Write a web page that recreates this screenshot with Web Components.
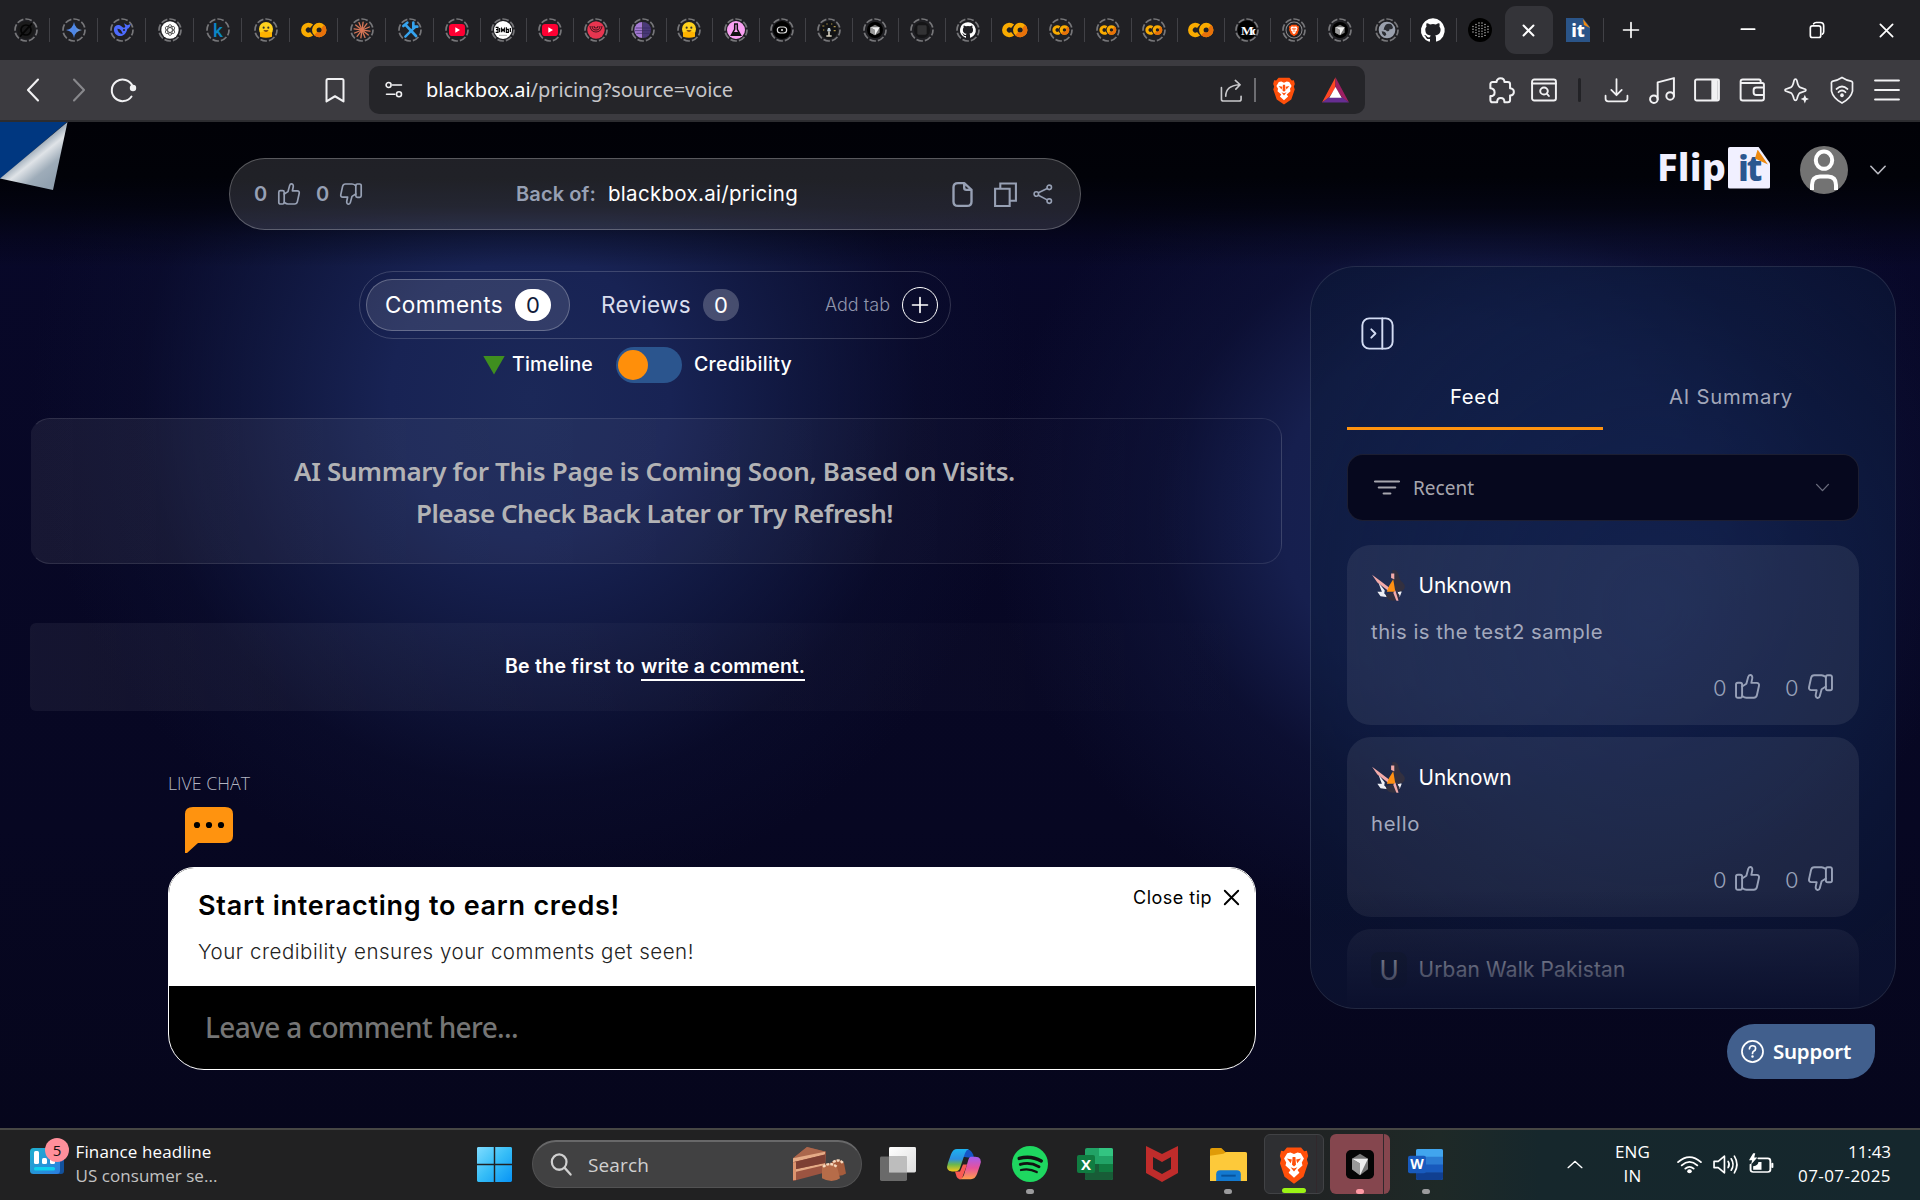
<!DOCTYPE html>
<html lang="en">
<head>
<meta charset="utf-8">
<title>Flipit</title>
<style>
html,body{margin:0;padding:0;background:#07071f}
body{width:1920px;height:1200px;overflow:hidden;font-family:"Noto Sans","Liberation Sans",sans-serif;color:#fff}
</style>
</head>
<body>
<desktop-shell></desktop-shell>
<script>
const define = (name, css, html) => customElements.define(name, class extends HTMLElement {
  constructor() {
    super();
    this.attachShadow({mode: 'open'}).innerHTML = `<style>*{box-sizing:border-box}${css}</style>${typeof html === 'function' ? '' : html}`;
  }
  connectedCallback() {
    if (typeof html === 'function' && !this.ready) {
      this.ready = true;
      this.shadowRoot.innerHTML += html(this);
    }
  }
});

/* Text run that tracks its letters so that it fills a given width. */
customElements.define('fit-text', class extends HTMLElement {
  constructor() {
    super();
    this.attachShadow({mode: 'open'}).innerHTML = '<style>:host{display:block;white-space:nowrap;flex:none}span{display:inline-block}</style><span><slot></slot></span>';
  }
  connectedCallback() {
    const w = +this.getAttribute('w');
    const n = this.textContent.length;
    const span = this.shadowRoot.querySelector('span');
    this.style.fontSize = this.getAttribute('s') + 'px';
    if (!w) return;
    this.style.width = w + 'px';
    span.style.letterSpacing = ((w - span.getBoundingClientRect().width) / n).toFixed(3) + 'px';
  }
});

const thumb = '<rect x="1.8" y="8.6" width="5.4" height="13.4" rx="1.6"/><path d="M7.2 12 11 9.6 12.6 3.6C13 2.2 13.7 1.7 14.6 1.8 16.2 2 16.5 3.6 16.2 5L15.4 8.8H20.2C21.8 8.8 22.5 10 22.2 11.4L20.4 19.6C20 21.4 19 22 17.6 22H11C9.4 22 8.6 21.4 7.2 20.4"/>';
const ring = '<circle cx="12" cy="12" r="11" fill="none" stroke="#77777a" stroke-width="1.7" stroke-dasharray="6.6 2.04" stroke-dashoffset="1"/>';
const inRing = s => ring + `<g transform="translate(4 4) scale(.6667)">${s}</g>`;
const colab = '<g fill="none" stroke-width="4.6"><path d="M9.6 8.2A5 5 0 1 0 9.6 15.8" stroke="#f9ab00"/><circle cx="17.2" cy="12" r="4.9" stroke="#f9ab00"/><path d="M13.7 15.5A4.9 4.9 0 0 0 20.7 8.5" stroke="#e8710a"/></g>';
const youtube = '<rect x="0" y="3" width="24" height="18" rx="5" fill="#ff0033"/><path d="M9.5 8 16.5 12 9.5 16z" fill="#fff"/>';
const hugging = '<circle cx="12" cy="10.5" r="10.5" fill="#ffd21e"/><path d="M3 16q9-4 18 0v6q-9 3-18 0z" fill="#ffb300"/><circle cx="8.5" cy="8.5" r="1.6" fill="#333"/><circle cx="15.5" cy="8.5" r="1.6" fill="#333"/><path d="M8 12.5q4 4.5 8 0z" fill="#5a2b12"/>';
const github = '<path fill="#fff" d="M12 .3a12 12 0 0 0-3.8 23.4c.6.1.8-.3.8-.6v-2.2c-3.3.7-4-1.5-4-1.5-.6-1.4-1.4-1.8-1.4-1.8-1-.7.1-.7.1-.7 1.2 0 1.9 1.2 1.9 1.2 1 1.8 2.8 1.3 3.5 1 0-.8.4-1.3.7-1.6-2.7-.3-5.5-1.3-5.5-6 0-1.2.5-2.3 1.3-3.1-.2-.4-.6-1.6 0-3.2 0 0 1-.3 3.4 1.2a11.5 11.5 0 0 1 6 0c2.3-1.5 3.3-1.2 3.3-1.2.6 1.6.2 2.8.1 3.2.8.8 1.2 1.9 1.2 3.2 0 4.6-2.8 5.6-5.5 5.9.5.4.9 1 .9 2.2v3.3c0 .3.1.7.8.6A12 12 0 0 0 12 .3"/>';
const brave = '<path d="M7 1.5h10l2.2 2.4 1.9-.3.9 3.3-.9 2.2.8 2.4-3.2 8.6-6.7 4.4-6.7-4.4-3.2-8.6.8-2.4L2 6.900l.9-3.3 1.9.3z" fill="#ff4f0a"/><path d="M7.2 5.2 9.500 4.800 12 5.700 14.500 4.800 16.800 5.200 19 8.500 17.500 11 18 13 14.500 15.800 15.800 17.500 12 20.700 8.200 17.500 9.500 15.800 6 13 6.500 11 5 8.500z" fill="#fff"/><path d="M7 8.500 10.500 9.200 9.700 11.500zM17 8.500 13.500 9.200 14.300 11.500zM9.600 14 12 14.800 14.400 14 12 16.700zM11 7.500h2l.4 5-1.400 1-1.400-1z" fill="#ff4f0a"/>';
const cube = '<circle cx="12" cy="12" r="12" fill="#000"/><path d="M12 4 19 8v8l-7 4-7-4V8z" fill="#777"/><path d="M5 8h14l-7 12v-8z" fill="#f2f2f2"/><path d="M5 8 12 12v8l-7-4z" fill="#9b9b9b"/>';
const S = (body, w = 2) => `<g fill="none" stroke="currentColor" stroke-width="${w}" stroke-linecap="round" stroke-linejoin="round">${body}</g>`;

const ICONS = {
  /* favicons */
  grok: inRing('<circle cx="12" cy="12" r="13" fill="#1a1a1b"/><g fill="none" stroke="#050505" stroke-width="2.6"><circle cx="12" cy="12" r="7.5"/><path d="M3 22 21 2"/></g>'),
  gemini: inRing('<defs><linearGradient id="g" x2="1" y2="0"><stop stop-color="#5d8df0"/><stop offset=".55" stop-color="#4b86e6"/><stop offset="1" stop-color="#8ea6c0"/></linearGradient></defs><path d="M12 0Q13.500 10.500 24 12 13.500 13.500 12 24 10.500 13.500 0 12 10.500 10.500 12 0z" fill="url(#g)"/>'),
  deepseek: inRing('<path d="M0 10C1 4 8 3 12 7c2 2 4 2 5 0l-2-5 5 3 5-2c-1 5-3 7-5 7-1 6-5 11-11 11C4 21-1 16 0 10z" fill="#4d6bfe"/><path d="M5 10q6 0 8 8-7-1-8-8z" fill="#202024"/><circle cx="15" cy="12" r="1.500" fill="#202024"/>'),
  openai: inRing('<circle cx="12" cy="12" r="13" fill="#fff"/><g fill="none" stroke="#333" stroke-width="1.100"><ellipse cx="12" cy="12" rx="3.500" ry="8"/><ellipse cx="12" cy="12" rx="3.500" ry="8" transform="rotate(60 12 12)"/><ellipse cx="12" cy="12" rx="3.500" ry="8" transform="rotate(120 12 12)"/></g>'),
  kaggle: ring + '<text x="12" y="18.500" text-anchor="middle" font-family="Roboto,sans-serif" font-size="19" font-weight="500" fill="#0a86c4">k</text>',
  hugging: inRing(hugging),
  colab, colabring: inRing(colab),
  claude: inRing('<g stroke="#d97757" stroke-width="2" stroke-linecap="round">' + [0,30,60,90,120,150].map(a => `<path d="M12 0V24" transform="rotate(${a + 8} 12 12)"/>`).join('') + '</g>'),
  tools: inRing('<g stroke="#35a3ee" stroke-linecap="round" fill="none"><path d="M5 22 19 8" stroke-width="3.600"/><path d="M17 1v6h6" stroke-width="4"/><path d="M2 6 8 1M5 4 21 21" stroke-width="4"/></g>'),
  youtube: inRing(youtube),
  bimble: inRing('<circle cx="12" cy="12" r="13.500" fill="#fff"/><path d="M1 8h3.500v3.500H1.500H4.500V15.500H1M7 9v6.500M10 15.500V10l2 3 2-3v5.500M17 8v7.500h3V11h-3M23 9v6" stroke="#000" stroke-width="1.800" fill="none"/><path d="M6 20h12" stroke="#999" stroke-width="1.200"/>'),
  spiral: inRing('<circle cx="12" cy="12" r="13" fill="#e73550"/><g fill="none" stroke="#40141c" stroke-width="1.500"><path d="M3 6a9 9 0 1 0 18 0M6 6a6 6 0 1 0 12 0M9 6a3 3 0 1 0 6 0"/></g>'),
  eclipse: inRing('<path d="M11 0a12 12 0 0 0 0 24z" fill="#a77bd6"/><path d="M12 0a12 12 0 0 1 0 24z" fill="#4a3a78"/><path d="M1 9h22M0 13h24M2 17h20" stroke="#34285a" stroke-width="1"/>'),
  flask: inRing('<circle cx="12" cy="12" r="13.500" fill="#f9a0f2"/><path d="M9 3h6M10 4v7L5 20h14l-5-9V4" fill="none" stroke="#111" stroke-width="2.200"/><path d="M8 15h8l3 5H5z" fill="#111"/>'),
  camera: inRing('<circle cx="12" cy="12" r="13.500" fill="#000"/><rect x="5" y="7.500" width="14" height="9" rx="4.500" fill="none" stroke="#ddd" stroke-width="1.800"/><circle cx="12" cy="12" r="1.600" fill="#ddd"/>'),
  lamp: inRing('<circle cx="12" cy="12" r="13.500" fill="#111214"/><path d="M9 14h6l-1.500-5h-3z" fill="#b9c9d3"/><path d="M8 21h8M12 14v7" stroke="#d8d2c0" stroke-width="2.400"/><path d="M2 6h3M8 3h2M15 3h2M19 7h3M3 12h2M19 13h3" stroke="#ae9349" stroke-width="1.800"/>'),
  cube: inRing(cube),
  square: inRing('<circle cx="12" cy="12" r="12" fill="#151517"/><rect x="5" y="5" width="14" height="14" rx="2" fill="#323234"/>'),
  github, githubring: inRing(github),
  medium: ring + '<defs><clipPath id="m"><rect width="20.500" height="24"/></clipPath></defs><circle cx="12" cy="12" r="9.500" fill="#000"/><text x="6" y="17" clip-path="url(#m)" font-family="Liberation Serif,serif" font-weight="700" font-size="13.500" fill="#fff" letter-spacing="-2">Mc</text>',
  bravering: inRing('<circle cx="12" cy="12" r="12" fill="none" stroke="#8b8b8e" stroke-width="1.500"/><g transform="translate(3 3) scale(.75)">' + brave + '</g>'),
  globe: inRing('<circle cx="12" cy="12" r="12.500" fill="#9aa0ad"/><path d="M12 3q8-2 9 6-3 3-5 1 0 4-4 4-2-3-5-2Q8 5 12 3zM4 14q6 0 7 5-2 2-3 2-4-3-4-7z" fill="#2b2d33"/>'),
  blackbox: '<circle cx="12" cy="12" r="12" fill="#000"/><g stroke="#cfcfcf" stroke-width="1.300" stroke-linecap="round" stroke-dasharray=".1 2.600"><path d="M5 8.500V16M8 6.500V18M11 5v14.500M14 5v14.500M17 6.500V18M20 8.500V16"/></g>',
  flipit: '<path d="M0 0H17L24 9V24H0z" fill="#2a5488"/><path d="M17 1 24 10 18 7z" fill="#f08a10"/><text x="12" y="19" text-anchor="middle" font-family="Noto Sans,sans-serif" font-weight="800" font-size="18" fill="#fff">it</text>',
  /* window and toolbar glyphs */
  close: S('<path d="M5 5 19 19M19 5 5 19"/>'),
  closethick: S('<path d="M5 5 19 19M19 5 5 19"/>', 2.8),
  plus: S('<path d="M12 3V21M3 12H21"/>'),
  minus: S('<path d="M4 11H20"/>', 2),
  restore: S('<rect x="4" y="7" width="12.500" height="14" rx="2.500"/><path d="M8 4.500q1-1.500 3-1.500h5q4 0 4 4v7q0 2-1.500 3"/>'),
  back: S('<path d="M16 1.500 6 12 16 22.500"/>', 2.100),
  forward: S('<path d="M8 1.500 18 12 8 22.500"/>', 2.100),
  reload: S('<path d="M20.500 18.500A10.800 10.800 0 1 1 21.500 8"/>', 2) + '<circle cx="22" cy="10" r="3.200" fill="currentColor"/>',
  bookmark: S('<path d="M3.500 2.500Q3.500 1 5 1H19Q20.500 1 20.500 2.500V22.500L12 17.500 3.500 22.500z"/>'),
  tune: S('<circle cx="5.500" cy="6" r="3"/><path d="M10 6H21M3 17H13"/><circle cx="18" cy="17" r="3"/>', 1.900),
  share: S('<path d="M1.500 9V21Q1.500 23 3.500 23H20Q22 23 22 21V18M6 18Q6 7 20 6M16 1.500 21 6 16.500 10.500"/>', 1.700),
  brave,
  bat: '<path d="M12 1 0 22 6 18 12 10z" fill="#ff4724"/><path d="M12 1 24 22 18 18 12 10z" fill="#9e1f63"/><path d="M0 22H24L18 17.500H6z" fill="#662d91"/><path d="M12 9 17.500 18H6.500z" fill="#fff"/>',
  puzzle: S('<path d="M3 6.500Q3 4.500 5 4.500H8.500C8.500 0 15.500 0 15.500 4.500H18.500Q20.500 4.500 20.500 6.500V10C25 10.500 25 16 20.500 16.500V20.500Q20.500 22.500 18.500 22.500H15.500C15.500 17.500 9 17.500 9 22.500H5Q3 22.500 3 20.500V17C8 17 8 10.500 3 10z"/>', 1.800),
  lookup: S('<rect x="1" y="1.500" width="22" height="21" rx="2"/><path d="M1 5.500H23"/><circle cx="12" cy="13" r="3.500"/><path d="M14.500 15.500 16.500 18"/>', 1.800),
  download: S('<path d="M12 1V16M7 11.500 12 16.500 17 11.500M1.500 17V20Q1.500 22.500 4 22.500H20Q22.500 22.500 22.500 20V17"/>', 1.700),
  music: S('<circle cx="4.500" cy="20.500" r="3.500"/><circle cx="19.500" cy="17.500" r="3.500"/><path d="M8 20.500V5L23 1V17.500"/>', 1.800),
  sidebar: '<path d="M16 2h6v20h-6z" fill="currentColor"/>' + S('<rect x="1" y="1.500" width="22" height="21" rx="1.500"/>', 1.800),
  wallet: S('<path d="M20 4.500V3Q20 1.500 18.500 1.500H3.500Q1.500 1.500 1.500 3.500V20.500Q1.500 22.500 3.500 22.500H21Q23 22.500 23 20.500V6.500Q23 5 21.500 5H2M23 9.500H16Q13.500 9.500 13.500 12V14.500Q13.500 17 16 17H23"/>', 1.800),
  leo: S('<path d="M11 1Q12 1 12.400 2.500 13.500 8 15.500 9L20.500 10.800Q21.500 11.500 20.500 12.500L15.500 14.200Q13.800 15 12.500 20 12 21.500 11 21.500 10 21.500 9.500 20 8.200 15 6.500 14.200L1.500 12.500Q.5 11.500 1.500 10.800L6.500 9Q8.500 8 9.600 2.500 10 1 11 1z"/>', 1.700) + '<path d="M20 16 21.200 19 24 20.200 21.200 21.300 20 24.500 18.800 21.300 16 20.200 18.800 19z" fill="currentColor"/>',
  vpn: S('<path d="M12 .5Q17 3.500 21 3.800 23 4 22.500 7V13Q21 19.500 12 24 3 19.500 1.500 13V7Q1 4 3 3.800 7 3.500 12 .5zM6.500 11Q12 6.500 17.500 11M8.500 14Q12 11 15.500 14"/>', 1.700) + '<circle cx="12" cy="16.800" r="1.800" fill="currentColor"/>',
  menu: S('<path d="M1 2.500H23M1 12H23M1 21.500H23"/>', 1.900),
  /* page glyphs */
  up: S(thumb, 1.700),
  down: `<g transform="rotate(180 12 12)">${S(thumb, 1.700)}</g>`,
  doc: S('<path d="M4 5Q4 1 8 1H13.500L20 7.500V19Q20 23 16 23H8Q4 23 4 19zM13.500 1.500V5.500Q13.500 7.500 15.500 7.500H19.500"/>', 2.100),
  copy: '<g fill="none" stroke="currentColor" stroke-width="2"><path d="M2 6.500H16V23H2zM7 6V1.500H22V18H17"/></g>',
  nodes: S('<circle cx="4" cy="12" r="2.700"/><circle cx="19.500" cy="4" r="2.700"/><circle cx="19.500" cy="20.500" r="2.700"/><path d="M6.500 10.500 17 5.300M6.500 13.500 17 19"/>', 1.900),
  chevdown: S('<path d="M2.500 7 12 17 21.500 7"/>', 2.200),
  chevup: S('<path d="M3 17 12 7 21 17"/>', 2.200),
  person: '<circle cx="12" cy="12" r="12" fill="#737373"/><g fill="none" stroke="#fff" stroke-width="2"><ellipse cx="12" cy="7.100" rx="4.100" ry="4.300"/><path d="M6 22V19.500Q6 15.200 10 15.200H14Q18 15.200 18 19.500V22"/></g>',
  panel: S('<rect x="1" y="1" width="22" height="22" rx="5"/><path d="M15.500 1V23M7.500 9 10.500 12 7.500 15"/>', 1.400),
  filter: S('<path d="M1 6H23M4.500 12.500H19.500M9 19H15"/>', 2.200),
  bubble: '<path d="M4 0H20Q24 0 24 3.500V14.500Q24 18 20 18H6.500L1 23H0V3.500Q0 0 4 0z" fill="#ff930f"/><g fill="#000"><circle cx="6" cy="9" r="1.550"/><circle cx="12" cy="9" r="1.550"/><circle cx="18" cy="9" r="1.550"/></g>',
  girl: '<path d="M7 12 13 19 12 24 9 17zM6 20 11 20 16 25 9 24zM24 17 29 20 27 25z" fill="#eceef4"/><path d="M20 1q5-1 6 4 1 5 4 7 4 4 0 7-5 3-9-1z" fill="#33303f"/><path d="M14 23q8-5 13 0 0 5-6 5-6 0-7-5z" fill="#33303f"/><path d="M1 5 8 10 18 17 16 19 6 12z" fill="#f3aaa8"/><path d="M19 4h3v5l-3-1z" fill="#f3aaa8"/><path d="M21 9 23 20 15 20 17 15z" fill="#ff9012"/><path d="M23 19 26 28H24L21 21z" fill="#f3aaa8"/>',
  help: S('<circle cx="12" cy="12" r="11"/><path d="M8.800 9.200Q9 6 12 6 15.300 6 15.200 9 15.200 10.800 13.200 11.800 12 12.500 12 14"/>', 1.800) + '<circle cx="12" cy="17.300" r="1.300" fill="currentColor"/>',
  /* taskbar */
  finance: '<defs><linearGradient id="f" x2="1" y2="1"><stop stop-color="#1fb0cf"/><stop offset="1" stop-color="#2b7de0"/></linearGradient></defs><path d="M27 8h7v23q0 3-3 3H25z" fill="#12519c"/><rect y="8" width="30" height="26" rx="3.500" fill="url(#f)"/><g fill="#fff"><rect x="4" y="11" width="5" height="13" rx="1.500"/><rect x="12" y="18" width="5" height="6" rx="1.500"/><rect x="20" y="14" width="5" height="10" rx="1.500"/></g><rect x="4" y="27" width="21" height="3.500" rx="1.500" fill="#0fd0f0"/>',
  windows: '<defs><linearGradient id="w" x2="1" y2="1"><stop stop-color="#7fdcff"/><stop offset=".5" stop-color="#36bdf7"/><stop offset="1" stop-color="#0793f5"/></linearGradient></defs><path d="M1 0H11.500V11.500H0V1Q0 0 1 0zM12.500 0H23Q24 0 24 1V11.500H12.500zM0 12.500H11.500V24H1Q0 24 0 23zM12.500 12.500H24V23Q24 24 23 24H12.500z" fill="url(#w)"/>',
  search: S('<circle cx="10" cy="9.500" r="8"/><path d="M16 15.500 22.500 22.500"/>', 2.400),
  cake: '<path d="M0 12 14 0 33 5 32 27 0 36z" fill="#9b5441"/><path d="M0 12 14 0 33 5 31 8z" fill="#ab674c"/><path d="M0 12 32 5V8L0 16zM0 24 32 17V19L0 27z" fill="#e5ab86"/><path d="M0 16 32 8V17L0 24z" fill="#7d3f33"/><path d="M0 16h3v19H0z" fill="#dc946e"/><path d="M38 17q6-7 13 0l2 11q-7 5-14 0z" fill="#a65c3c"/><path d="M29 21q7-7 15 0l3 12q-8 6-18 0z" fill="#b66c49"/><path d="M30 21q7-6 14 0M40 16q6-4 10 1" fill="none" stroke="#f7d9be" stroke-width="2.500" stroke-dasharray="3 1"/>',
  taskview: '<defs><linearGradient id="t" x2="1" y2="1"><stop stop-color="#fff"/><stop offset="1" stop-color="#ddd"/></linearGradient></defs><rect x="9" y="0" width="27" height="27" rx="1.500" fill="url(#t)"/><rect x="0" y="10" width="27" height="26" rx="1.500" fill="#777" fill-opacity=".85"/><path d="M9 10h18v17H9z" fill="#bdbdbd"/>',
  copilot: '<defs><linearGradient id="c1" x2="0" y2="1"><stop stop-color="#1db3f0"/><stop offset=".45" stop-color="#2c8fe0"/><stop offset=".7" stop-color="#6db84a"/><stop offset="1" stop-color="#f6c61a"/></linearGradient><linearGradient id="c2" x2="0" y2="1"><stop stop-color="#a45cf0"/><stop offset=".5" stop-color="#e6529c"/><stop offset="1" stop-color="#ff9d4d"/></linearGradient></defs><path d="M18 0q6 0 8 6l1 4h-6l-5-1z" fill="#1656c8"/><path d="M10 0H22q-3 1-4 5L13 22q-1 4-5 4H5q-7 0-4-10L4 6Q6 0 10 0z" fill="url(#c1)"/><path d="M24 9h4q8 0 5 10l-3 10q-2 6-6 6H12q4-1 5-5l4-16q1-5 3-5z" fill="url(#c2)"/><path d="M8 26h5l3-8h4l-4 13q-1 4-3 4-3 0-4-5z" fill="#fb5a53"/>',
  spotify: '<circle cx="12" cy="12" r="12" fill="#1ed760"/><g fill="none" stroke="#121212" stroke-linecap="round"><path d="M4.800 8.300Q12.500 6 19.500 10" stroke-width="2.300"/><path d="M5.500 12.300Q12 10.400 18 13.800" stroke-width="1.900"/><path d="M6 16Q11.500 14.600 16.500 17.400" stroke-width="1.500"/></g>',
  excel: '<rect x="8" y="1" width="28" height="32" rx="2" fill="#21a366"/><path d="M22 1h12q2 0 2 2v6H22z" fill="#33c481"/><path d="M8 17h14v16H10q-2 0-2-2z" fill="#185c37"/><path d="M22 17h14v8H22z" fill="#107c41"/><path d="M22 25h14v6q0 2-2 2H22z" fill="#185c37"/><rect y="8" width="18" height="18" rx="2" fill="#107c41"/><text x="9" y="22.500" text-anchor="middle" font-family="Open Sans,sans-serif" font-size="15" font-weight="700" fill="#fff">X</text>',
  mcafee: '<path d="M0 0 16 8 32 0V27L16 36 0 27zM7 11V23L16 28 25 23V11L16 16z" fill="#c02c2b" fill-rule="evenodd"/>',
  folder: '<path d="M0 2Q0 0 2 0H11L15 4H34Q36 4 36 6V14H0z" fill="#e09b07"/><path d="M0 8 13 6 16 4H34Q36 4 36 6V34H0z" fill="#fdc93a"/><path d="M6 34V27Q6 23 10 23H26Q30 23 30 27V34z" fill="#1379d0"/><path d="M11 28.500H25" stroke="#07539c" stroke-width="2"/>',
  cursor: '<rect width="28" height="30" rx="5" fill="#050505"/><path d="M14 4 22 9V20L14 26 6 20V9z" fill="#777"/><path d="M6 9H22L14 26V14z" fill="#ededed"/><path d="M6 9 14 14V26L6 20z" fill="#999"/>',
  word: '<rect x="8" y="1" width="27" height="32" rx="2" fill="#2b7cd3"/><path d="M10 1h23q2 0 2 2v6H8V3q0-2 2-2z" fill="#41a5ee"/><path d="M8 17h27v8H8z" fill="#185abd"/><path d="M8 25h27v6q0 2-2 2H10q-2 0-2-2z" fill="#103f91"/><rect y="8" width="18" height="18" rx="2" fill="#185abd"/><text x="9" y="22" text-anchor="middle" font-family="Open Sans,sans-serif" font-size="14" font-weight="700" fill="#fff">W</text>',
  wifi: S('<path d="M1 10Q12-1 23 10M4.500 13.500Q12 6 19.500 13.500M8 17Q12 13 16 17"/>', 1.800) + '<circle cx="12" cy="20" r="2.200" fill="currentColor"/>',
  sound: S('<path d="M1 9V15H5L11 20V4L5 9zM14.500 9Q16.500 12 14.500 15M17.500 6.500Q21 12 17.500 17.500M20.500 4Q25.500 12 20.500 20"/>', 1.600),
  battery: S('<path d="M9 5H18Q20.500 5 20.500 8V18Q20.500 20.500 18 20.500H4Q1.500 20.500 1.500 18V12M22.500 11V15"/>', 1.800) + '<path d="M9 9H12V18H4V14Q9 13 9 9z" fill="currentColor"/><path d="M4-1 0 7H3L2 12 8 4H5L6-1z" fill="currentColor"/>'
};

define('ui-icon', ':host{display:block;flex:none}svg{display:block;overflow:visible}', el => {
  const w = el.getAttribute('w') || 24, h = el.getAttribute('h') || w;
  el.style.width = w + 'px'; el.style.height = h + 'px';
  return `<svg width="${w}" height="${h}" viewBox="0 0 ${el.getAttribute('box') || '24 24'}" preserveAspectRatio="none">${ICONS[el.getAttribute('name')]}</svg>`;
});

/* One slot of an icon row: its glyph sits in the middle of the given width. */
define('icon-cell', ':host{display:flex;flex:none;align-items:center;justify-content:center;height:100%}', el => {
  el.style.width = el.getAttribute('span') + 'px';
  return '<slot></slot>';
});

const favicons = ['grok','gemini','deepseek','openai','kaggle','hugging','colab','claude','tools','youtube','bimble','youtube','spiral','eclipse','hugging','flask','camera','lamp','cube','square','githubring','colab','colabring','colabring','colabring','colab','medium','bravering','cube','globe','github','blackbox'];
define('tab-strip', `
:host{display:flex;height:60px;background:#202024;padding-left:2px;align-items:center}
.tab{flex:none;height:24px;width:46.5px;display:flex;justify-content:center;border-right:1.5px solid #414146}
.tab.wide{width:48px}.tab.last{border-color:transparent}
.active{flex:none;width:48px;height:48px;border-radius:11px;background:#343439;display:flex;align-items:center;justify-content:center;margin-left:1px}
.flip{width:50px;margin-left:1px}
`, `${favicons.map((f, i) => `<div class="tab ${i < 9 ? 'wide' : ''} ${i === 31 ? 'last' : ''}"><ui-icon name="${f}"></ui-icon></div>`).join('')}
<div class="active"><ui-icon name="closethick" w="17"></ui-icon></div>
<div class="tab flip"><ui-icon name="flipit"></ui-icon></div>
<icon-cell span="55"><ui-icon name="plus" w="20"></ui-icon></icon-cell>
<icon-cell span="179"><ui-icon name="minus" w="20"></ui-icon></icon-cell>
<icon-cell span="40" style="margin-left:-41px"><ui-icon name="restore" w="20"></ui-icon></icon-cell>
<icon-cell span="99"><ui-icon name="close" w="21"></ui-icon></icon-cell>`);

define('url-bar', `
:host{display:flex;align-items:center;width:996px;height:48px;background:#252529;border-radius:10px;flex:none}
.u{color:#c6c6c9;line-height:30px;margin-left:8px}b{font-weight:400;color:#fff}
.gap{flex:1}.bar{width:2px;height:24px;background:#6d6d71;margin:0 14px 0 11px}
.share{color:#c9c9cc}
`, `<icon-cell span="49"><ui-icon name="tune" w="20"></ui-icon></icon-cell>
<fit-text class="u" s="20" w="307"><b>blackbox.ai</b>/pricing?source=voice</fit-text><div class="gap"></div>
<ui-icon class="share" name="share" w="23"></ui-icon><div class="bar"></div>
<icon-cell span="28"><ui-icon name="brave" w="26" h="28"></ui-icon></icon-cell>
<icon-cell span="67" style="padding-left:8px"><ui-icon name="bat" w="27" h="29"></ui-icon></icon-cell>`);

define('tool-bar', `
:host{display:flex;height:62px;background:#3c3b40;border-bottom:2px solid #2c2c30;align-items:center;color:#f1f1f3}
.dim{color:#88888c}.sp{flex:1}.bar{width:3px;height:24px;background:#222226;border-radius:2px;margin:0 13px 0 12px}
`, `<icon-cell span="67"><ui-icon name="back" w="24" h="24"></ui-icon></icon-cell>
<icon-cell span="22"><ui-icon class="dim" name="forward"></ui-icon></icon-cell>
<icon-cell span="67"><ui-icon name="reload" w="24"></ui-icon></icon-cell>
<div style="width:155px;flex:none"></div>
<icon-cell span="40" style="margin-left:4px"><ui-icon name="bookmark" w="24" h="25"></ui-icon></icon-cell>
<url-bar style="margin-left:14px"></url-bar><div class="sp"></div>
<icon-cell span="44"><ui-icon name="puzzle" w="27" h="27"></ui-icon></icon-cell>
<icon-cell span="44"><ui-icon name="lookup" w="26" h="24"></ui-icon></icon-cell>
<div class="bar"></div>
<icon-cell span="45"><ui-icon name="download" w="25"></ui-icon></icon-cell>
<icon-cell span="45"><ui-icon name="music" w="26" h="26"></ui-icon></icon-cell>
<icon-cell span="45"><ui-icon name="sidebar" w="26" h="24"></ui-icon></icon-cell>
<icon-cell span="45"><ui-icon name="wallet" w="26" h="24"></ui-icon></icon-cell>
<icon-cell span="45"><ui-icon name="leo" w="25"></ui-icon></icon-cell>
<icon-cell span="45"><ui-icon name="vpn" w="24" h="26"></ui-icon></icon-cell>
<icon-cell span="45"><ui-icon name="menu" w="26" h="24"></ui-icon></icon-cell>
<div style="width:11px"></div>`);

define('page-pill', `
:host{display:flex;width:852px;height:72px;border-radius:36px;border:1px solid rgba(255,255,255,.25);background:rgba(255,255,255,.125);align-items:center;padding:0 27px 0 24px;color:#97a0b4;margin-top:36px;font-family:Inter,sans-serif}
fit-text{line-height:30px}.b{font-weight:600}
`, `<fit-text class="b" s="20" w="13">0</fit-text><ui-icon name="up" w="24" style="margin:0 15px 0 10px"></ui-icon>
<fit-text class="b" s="20" w="13">0</fit-text><ui-icon name="down" w="24" style="margin-left:10px"></ui-icon>
<fit-text class="b" s="20" w="80" style="margin-left:153px">Back of:</fit-text>
<fit-text s="20.500" w="190" style="margin-left:12px;color:#fff">blackbox.ai/pricing</fit-text>
<div style="flex:1"></div><ui-icon name="doc" w="27" h="25"></ui-icon><ui-icon name="copy" w="25" style="margin:0 15px 0 17px"></ui-icon><ui-icon name="nodes" w="20"></ui-icon>`);

define('tab-pill', `
:host{display:flex;width:592px;height:68px;border-radius:34px;border:1px solid rgba(255,255,255,.17);align-items:center;margin-top:41px;padding:0 12px 0 6px;font-family:Inter,sans-serif}
.on{display:flex;align-items:center;width:204px;height:52px;border-radius:26px;border:1px solid rgba(255,255,255,.25);background:rgba(255,255,255,.11);padding-left:18px}
fit-text{line-height:30px}i{font-style:normal;display:flex;align-items:center;justify-content:center;width:36px;height:32px;border-radius:16px;margin-left:12px;font-size:22px;background:rgba(255,255,255,.22)}
.on i{background:#fff;color:#111b3a}.add{width:36px;height:36px;border:1.5px solid #fff;border-radius:50%;display:flex;align-items:center;justify-content:center}
`, `<div class="on"><fit-text s="22.500" w="118">Comments</fit-text><i>0</i></div>
<fit-text s="22.500" w="90" style="margin-left:31px;color:#d9dded">Reviews</fit-text><i>0</i><div style="flex:1"></div>
<fit-text s="18" w="65" style="color:#9196ad;margin-right:12px;font-weight:300">Add tab</fit-text><div class="add"><ui-icon name="plus" w="20"></ui-icon></div>`);

define('view-switch', `
:host{display:flex;align-items:center;height:36px;margin-top:8px;width:310px;align-self:flex-start;margin-left:483px;font-family:Inter,sans-serif;font-weight:500}
.tri{width:22px;height:19px;background:#3f8f1f;clip-path:polygon(0 0,100% 0,50% 100%)}
.sw{width:66px;height:36px;border-radius:18px;background:#2b558e;padding:3px 2px;margin:0 12px 0 23px}.sw div{width:30px;height:30px;border-radius:50%;background:#ff8f0a}
fit-text{line-height:30px;margin-top:-2px}
`, `<div class="tri"></div><fit-text s="19.500" w="81" style="margin-left:7px">Timeline</fit-text><div class="sw"><div></div></div><fit-text s="19.500" w="98">Credibility</fit-text>`);

define('summary-card', `
:host{display:flex;flex-direction:column;align-items:center;width:1252px;height:146px;margin:35px 0 0 1px;border-radius:20px;border:1px solid rgba(255,255,255,.1);border-left-color:transparent;background:linear-gradient(90deg,rgba(255,255,255,.065),rgba(255,255,255,.03) 60%,rgba(255,255,255,0));padding:31px 2px 0 0;font-weight:600;color:#b3b3b5;line-height:42px}
`, `<fit-text s="26" w="721">AI Summary for This Page is Coming Soon, Based on Visits.</fit-text><fit-text s="26" w="477">Please Check Back Later or Try Refresh!</fit-text>`);

define('first-comment', `
:host{display:flex;justify-content:center;width:1252px;height:88px;margin:59px 0 0 2px;border-radius:6px;background:linear-gradient(90deg,rgba(255,255,255,.055),rgba(255,255,255,.02) 60%,transparent);padding:31px 2px 0 0;font:600 20px/25px Inter,sans-serif}
.l{border-bottom:2px solid #fff;height:27px;margin-left:6px}
`, `<fit-text s="19.500" w="130">Be the first to</fit-text><fit-text class="l" s="19.500" w="164">write a comment.</fit-text>`);

define('chat-box', `
:host{display:flex;flex-direction:column;align-self:flex-start;margin-left:168px}
.lc{line-height:24px;margin-top:60px;color:#b4b6c2;font-family:"Open Sans",sans-serif;font-weight:300}
.box{width:1088px;height:203px;margin-top:12px;border-radius:26px 26px 36px 36px;border:1px solid #fff;background:#000;overflow:hidden}
.tip{height:118px;background:#fff;color:#000;display:flex;justify-content:space-between;padding:19px 12px 0 29px;font-family:Inter,sans-serif}
.close{display:flex;height:20px;align-items:center;gap:8px}
.in{padding-left:36px;line-height:82px;color:#757575;font-weight:500}
`, `<fit-text class="lc" s="17.800" w="82">LIVE CHAT</fit-text><ui-icon name="bubble" w="48" h="48" style="margin:12px 0 0 17px"></ui-icon>
<div class="box"><div class="tip"><div><fit-text s="27" w="422" style="font-weight:600;line-height:38px">Start interacting to earn creds!</fit-text><fit-text s="20.500" w="496" style="font-weight:300;line-height:30px;margin-top:12px;color:#222">Your credibility ensures your comments get seen!</fit-text></div>
<div class="close"><fit-text s="18" w="79">Close tip</fit-text><ui-icon name="close" w="23"></ui-icon></div></div>
<fit-text class="in" s="28" w="313">Leave a comment here...</fit-text></div>`);

define('flip-logo', `
:host{display:flex;align-items:center;font-family:"Noto Sans",sans-serif;font-weight:800;color:#f1f0ff;margin-top:-5px}
.f{line-height:40px;margin-top:-4px}.it{width:42px;height:42px;border-radius:2px;background:#f1f0ff;color:#2a5790;margin-left:2px;clip-path:polygon(0 0,72% 0,100% 40%,100% 100%,0 100%);display:flex;justify-content:center;position:relative;line-height:42px}
.c{position:absolute;left:27px;top:3px;width:13px;height:15px;background:#ee8a10;clip-path:polygon(20% 0,100% 100%,0 60%)}
`, `<fit-text class="f" s="38" w="69">Flip</fit-text><div class="it"><fit-text s="35" w="22">it</fit-text><div class="c"></div></div>`);

define('feed-card', `
:host{display:block;height:180px;border-radius:24px;background:rgba(255,255,255,.075);padding:21px 25px 0 24px;margin-bottom:12px;font-family:Inter,sans-serif;flex:none}
.h{display:flex;align-items:center;height:40px}.u{width:36px;height:36px;border-radius:8px;background:rgba(20,30,25,.35);display:flex;align-items:center;justify-content:center;font:400 26px/1 Lato,sans-serif}
.body{margin-top:11px;height:30px;color:#a3a9bd;line-height:30px}.v{display:flex;justify-content:flex-end;align-items:center;margin-top:25px;color:#98a1b8;height:28px}
fit-text{line-height:30px}
`, el => {
  const a = k => el.getAttribute(k);
  return `<div class="h">${a('letter') ? `<div class="u">${a('letter')}</div>` : '<ui-icon name="girl" w="36" h="34" box="34 30"></ui-icon>'}<fit-text s="20.800" w="${a('nw')}" style="margin-left:11.500px;margin-top:-1px">${a('name')}</fit-text></div>
${a('text') ? `<fit-text class="body" s="20.300" w="${a('tw')}">${a('text')}</fit-text><div class="v"><fit-text s="22" w="13" style="font-weight:300;padding-top:3px">0</fit-text><ui-icon name="up" w="27" style="margin:0 24px 0 8px"></ui-icon><fit-text s="22" w="13" style="font-weight:300;padding-top:3px">0</fit-text><ui-icon name="down" w="27" style="margin-left:9px"></ui-icon></div>` : ''}`;
});

define('feed-panel', `
:host{display:flex;flex-direction:column;width:586px;height:743px;border-radius:46px;border:1px solid rgba(255,255,255,.1);background:radial-gradient(ellipse 400px 430px at 340px 340px,rgba(18,33,76,.85),rgba(15,30,68,.7) 55%,rgba(12,25,56,.55));overflow:hidden;padding:50px 36px 0;position:relative}
.tabs{display:flex;font-family:Inter,sans-serif;margin-top:29px;height:83px;flex:none}.tabs div{width:256px;height:50px;margin-top:1px;display:flex;justify-content:center;line-height:34px;color:#a2a7ba}.tabs .on{color:#fff;border-bottom:3px solid #ff930f}
.sel{height:67px;flex:none;border-radius:16px;border:1px solid rgba(255,255,255,.09);background:#06081e;display:flex;align-items:center;padding:0 26px;color:#a6a6ae;margin:-8px 0 24px;line-height:30px}
.fade{position:absolute;inset:auto 0 0 0;height:118px;background:linear-gradient(transparent,rgba(11,17,48,.6) 60%,#0b102d)}
`, `<ui-icon name="panel" w="33" style="margin-left:14px;color:#d3dcf3"></ui-icon>
<div class="tabs"><div class="on"><fit-text s="20.300" w="50">Feed</fit-text></div><div><fit-text s="20.300" w="124">AI Summary</fit-text></div></div>
<div class="sel"><ui-icon name="filter" w="26" h="22" style="margin-top:-2px"></ui-icon><fit-text s="19" w="61" style="margin-left:13px">Recent</fit-text><div style="flex:1"></div><ui-icon name="chevdown" w="15" style="color:#696b7c;margin-right:2px"></ui-icon></div>
<feed-card name="Unknown" nw="93" text="this is the test2 sample" tw="232"></feed-card>
<feed-card name="Unknown" nw="93" text="hello" tw="49"></feed-card>
<feed-card name="Urban Walk Pakistan" nw="207" letter="U"></feed-card>
<div class="fade"></div>`);

define('web-page', `
:host{display:flex;height:1006px;background:
linear-gradient(#010107 0,#010208 55px,rgba(2,3,12,.85) 85px,rgba(2,3,12,.35) 115px,transparent 145px),
radial-gradient(ellipse 500px 500px at 530px 275px,#1b2858,#182354 28%,rgba(19,28,70,.75) 54%,rgba(13,18,52,.35) 78%,transparent),
radial-gradient(ellipse 500px 440px at 1490px 390px,#182455,#161f4e 42%,rgba(16,22,62,.55) 66%,transparent),
linear-gradient(#08082a,#070722 70%,#06061c);position:relative}
.corner{position:absolute;left:0;top:0}
.left{width:1310px;display:flex;flex-direction:column;align-items:center}
.right{width:610px;display:flex;flex-direction:column}
.user{height:96px;margin-bottom:48px;display:flex;align-items:center;padding-left:347px;color:#b9b9c1}
.support{width:148px;height:55px;border-radius:28px 5px 28px 28px;background:#415f8d;align-self:flex-end;margin:15px 45px 0 0;display:flex;align-items:center;padding-left:14px;font-weight:600;line-height:30px;font-family:"Noto Sans",sans-serif}
`, `<svg class="corner" width="70" height="70"><defs><linearGradient id="s" gradientUnits="userSpaceOnUse" x1="30" y1="28" x2="54" y2="58"><stop stop-color="#93a2b1"/><stop offset=".28" stop-color="#dfe3e7"/><stop offset=".65" stop-color="#9eacb9"/><stop offset="1" stop-color="#91a1b0"/></linearGradient></defs><path d="M0 0H67L0 57z" fill="#003780"/><path d="M67.500 0 0 56.500 53 68z" fill="url(#s)"/></svg>
<div class="left"><page-pill></page-pill><tab-pill></tab-pill><view-switch></view-switch><summary-card></summary-card><first-comment></first-comment><chat-box></chat-box></div>
<div class="right"><div class="user"><flip-logo></flip-logo><ui-icon name="person" w="48" style="margin:0 21px 0 30px"></ui-icon><ui-icon name="chevdown" w="18"></ui-icon></div>
<feed-panel></feed-panel><div class="support"><ui-icon name="help" w="23"></ui-icon><fit-text s="20.500" w="78" style="margin-left:9px;margin-top:-2px">Support</fit-text></div></div>`);

define('task-cell', `
:host{display:flex;flex-direction:column;align-items:center;justify-content:center;height:60px;width:60px;flex:none;border-radius:6px;position:relative}
:host([kind=active]){background:#2e2f32;border:1px solid #414245}
:host([kind=alert]){background:#85464e}
:host([kind=alert])::after,:host([kind=active])::after{content:"";position:absolute;inset:0 6px 0 auto;border-right:1.5px solid #31282c}
i{position:absolute;bottom:0;width:8px;height:5px;border-radius:3px;background:#9b9b9d}
`, el => {
  const d = el.getAttribute('dot');
  return '<slot></slot>' + (d ? `<i style="${d}"></i>` : '');
});

define('task-bar', `
:host{display:flex;align-items:center;height:72px;border-top:2px solid #474744;padding-bottom:2px;box-sizing:border-box;background:linear-gradient(90deg,#212122 0,#212122 1270px,#1e2927 1440px,#16272c 1540px,#15272d);font-family:"Open Sans",sans-serif;line-height:24px}
.badge{position:relative}.badge span{position:absolute;left:15px;top:-2px;width:24px;height:24px;border-radius:50%;background:#ff8f9b;color:#111;text-align:center;font-size:15px}
.search{width:330px;height:48px;border-radius:24px;background:#414142;border:1px solid #525253;border-top:2px solid #686869;margin-left:20px;display:flex;align-items:center;padding:0 14px 0 17px;color:#d0d0d0}
.icons{display:flex;align-items:center}.tray{display:flex;align-items:center;flex:1;justify-content:flex-end;padding-right:29px}
.col{display:flex;flex-direction:column;align-items:center}
`, `<div class="badge" style="margin-left:30px"><ui-icon name="finance" w="34" h="34" box="34 34" style="margin-bottom:14px"></ui-icon><span>5</span></div>
<div style="margin-left:11.500px"><fit-text s="17" w="136">Finance headline</fit-text><fit-text s="17" w="142" style="color:#c3c3c3">US consumer se...</fit-text></div>
<ui-icon name="windows" w="35" style="margin-left:259.500px"></ui-icon>
<div class="search"><ui-icon name="search" w="22" h="23"></ui-icon><fit-text s="19" w="61" style="margin-left:16px">Search</fit-text><div style="flex:1"></div><ui-icon name="cake" w="54" h="35" box="54 37"></ui-icon></div>
<div class="icons" style="margin-left:6px">
<task-cell><ui-icon name="taskview" w="36" h="34" box="36 36"></ui-icon></task-cell>
<task-cell style="margin-left:6px"><ui-icon name="copilot" w="34" h="31" box="34 36"></ui-icon></task-cell>
<task-cell style="margin-left:6px" dot=" "><ui-icon name="spotify" w="36"></ui-icon></task-cell>
<task-cell style="margin-left:5px"><ui-icon name="excel" w="36" h="34" box="36 34"></ui-icon></task-cell>
<task-cell style="margin-left:7px"><ui-icon name="mcafee" w="32" h="36" box="32 36"></ui-icon></task-cell>
<task-cell style="margin-left:6px" dot=" "><ui-icon name="folder" w="37" h="33" box="36 34"></ui-icon></task-cell>
<task-cell style="margin-left:6px" kind="active" dot="width:24px;background:#9bf315"><ui-icon name="brave" w="34" h="38"></ui-icon></task-cell>
<task-cell style="margin-left:6px" kind="alert" dot="background:#ff9aa5"><ui-icon name="cursor" w="28" h="29" box="28 30"></ui-icon></task-cell>
<task-cell style="margin-left:6px" dot=" "><ui-icon name="word" w="36" h="33" box="36 34"></ui-icon></task-cell></div>
<div class="tray"><ui-icon name="chevup" w="18" h="15"></ui-icon><div class="col" style="margin-left:31px"><fit-text s="17" w="35">ENG</fit-text><fit-text s="17" w="18">IN</fit-text></div>
<ui-icon name="wifi" w="25" h="22" style="margin-left:27px"></ui-icon><ui-icon name="sound" w="25" style="margin-left:11px"></ui-icon><ui-icon name="battery" w="25" h="21" style="margin-left:11px"></ui-icon>
<div class="col" style="align-items:flex-end;margin-left:24px"><fit-text s="17" w="43">11:43</fit-text><fit-text s="17" w="93">07-07-2025</fit-text></div></div>`);

define('desktop-shell', ':host{display:flex;flex-direction:column;width:1920px;height:1200px;overflow:hidden}',
  '<tab-strip></tab-strip><tool-bar></tool-bar><web-page></web-page><task-bar></task-bar>');
</script>
</body>
</html>
